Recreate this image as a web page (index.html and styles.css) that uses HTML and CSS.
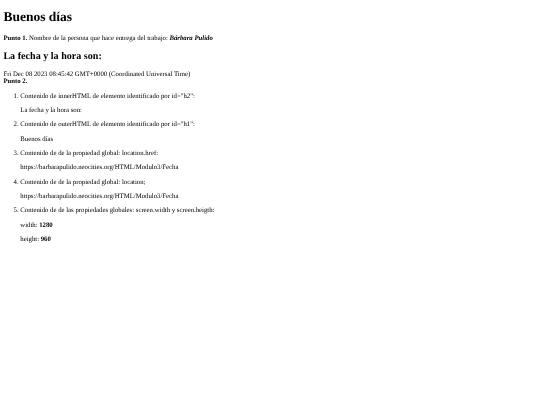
FILE: index.html
```html
<!DOCTYPE html>
<html lang="es">
<head>
<meta charset="UTF-8">
<title>Fecha</title>
<link rel="stylesheet" href="styles.css">
</head>
<body>
<h1 id="h1">Buenos días</h1>
<p><strong>Punto 1.</strong> Nombre de la persona que hace entrega del trabajo: <strong><em>Bárbara Pulido</em></strong></p>
<h2 id="h2">La fecha y la hora son:</h2>
<div class="fecha">Fri Dec 08 2023 08:45:42 GMT+0000 (Coordinated Universal Time)</div>
<div><strong>Punto 2.</strong></div>
<ol>
  <li>
    <p>Contenido de innerHTML de elemento identificado por id="h2":</p>
    <p>La fecha y la hora son:</p>
  </li>
  <li>
    <p>Contenido de outerHTML de elemento identificado por id="h1":</p>
    <p>Buenos días</p>
  </li>
  <li>
    <p>Contenido de de la propiedad global: location.href:</p>
    <p>https://barbarapulido.neocities.org/HTML/Modulo3/Fecha</p>
  </li>
  <li>
    <p>Contenido de de la propiedad global: location;</p>
    <p>https://barbarapulido.neocities.org/HTML/Modulo3/Fecha</p>
  </li>
  <li>
    <p>Contenido de de las propiedades globales: screen.width y screen.heigth:</p>
    <p>width: <strong>1280</strong></p>
    <p>height: <strong>960</strong></p>
  </li>
</ol>
</body>
</html>
```
FILE: styles.css
```css
body {
  margin: 0;
  padding: 3.4px;
  font-family: "Liberation Serif", "Times New Roman", serif;
  font-size: 6.75px;
  line-height: 7.6px;
  color: #000;
  background-color: #fff;
  text-rendering: geometricPrecision;
  will-change: transform;
}
h1 {
  font-size: 13.5px;
  line-height: 15.5px;
  margin: 6.1px 0 9.9px;
}
h2 {
  font-size: 10.1px;
  line-height: 11.6px;
  margin: 8.1px 0 8.5px;
}
p {
  margin: 6.75px 0;
}
ol {
  margin: 6.75px 0;
  padding-left: 16.9px;
}
```
